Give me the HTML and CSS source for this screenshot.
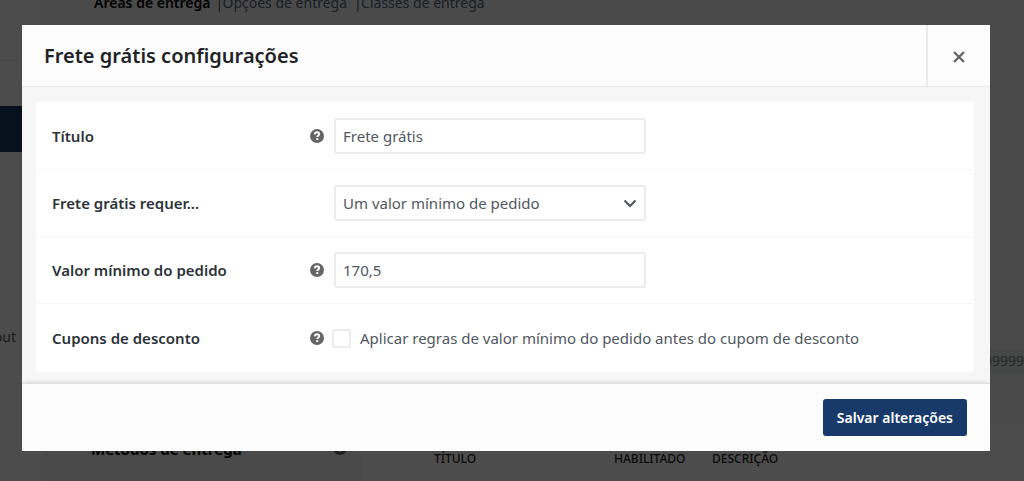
FILE: index.html
```html
<!DOCTYPE html>
<html lang="pt-BR">
<head>
<meta charset="utf-8">
<meta name="viewport" content="width=device-width, initial-scale=1">
<title>Frete grátis configurações</title>
<link rel="stylesheet" href="styles.css">
</head>
<body>
<svg class="sprite" aria-hidden="true">
  <symbol id="help" viewBox="0 0 14 14">
    <circle cx="7" cy="7" r="7" fill="currentColor"/>
    <path d="M4.800 5.400C4.900 3.900 5.800 3.300 7 3.300c1.400 0 2.200.7 2.200 1.800 0 1.600-2 1.500-2 3" fill="none" stroke="#fff" stroke-width="1.900"/>
    <rect x="6.200" y="9.200" width="2" height="1.800" fill="#fff"/>
  </symbol>
</svg>

<div class="page">
  <aside class="sidebar">
    <div class="sidebar-top"></div>
    <div class="sidebar-current"></div>
    <a class="sidebar-link" href="#checkout">out</a>
  </aside>
  <main class="content">
    <nav class="tabs">
      <a class="current" href="#areas">Áreas de entrega</a><span>|</span><a href="#opcoes">Opções de entrega</a><span>|</span><a href="#classes">Classes de entrega</a>
    </nav>
    <div class="postcodes"><span class="postcode-range">99999</span></div>
    <section class="methods">
      <h2>Métodos de entrega <svg class="help"><use href="#help"/></svg></h2>
      <table>
        <thead><tr><th class="col-title">Título</th><th class="col-enabled">Habilitado</th><th>Descrição</th></tr></thead>
      </table>
    </section>
  </main>
</div>

<div class="backdrop">
  <div class="modal" role="dialog" aria-modal="true" aria-labelledby="modal-title">
    <header class="modal-header">
      <h1 id="modal-title">Frete grátis configurações</h1>
      <button class="close" type="button" aria-label="Fechar">
        <svg viewBox="0 0 12 12"><path d="M1 1l10 10M11 1L1 11" fill="none" stroke="currentColor" stroke-width="2.400"/></svg>
      </button>
    </header>
    <form class="modal-form">
      <div class="modal-body">
        <div class="panel">
          <div class="row">
            <label for="title">Título</label>
            <svg class="help"><use href="#help"/></svg>
            <input class="field" id="title" type="text" value="Frete grátis">
          </div>
          <div class="row">
            <label for="requires">Frete grátis requer...</label>
            <span></span>
            <div class="select-wrap">
              <select class="field" id="requires"><option>Um valor mínimo de pedido</option></select>
              <svg class="chevron" viewBox="0 0 14 9"><path d="M1.500 1.500L7 7l5.500-5.500" fill="none" stroke="currentColor" stroke-width="2.200"/></svg>
            </div>
          </div>
          <div class="row">
            <label for="minimum">Valor mínimo do pedido</label>
            <svg class="help"><use href="#help"/></svg>
            <input class="field" id="minimum" type="text" value="170,5">
          </div>
          <div class="row">
            <span class="row-name">Cupons de desconto</span>
            <svg class="help"><use href="#help"/></svg>
            <label class="check"><input type="checkbox">Aplicar regras de valor mínimo do pedido antes do cupom de desconto</label>
          </div>
        </div>
      </div>
      <footer class="modal-footer">
        <button class="save" type="submit">Salvar alterações</button>
      </footer>
    </form>
  </div>
</div>
</body>
</html>
```
FILE: styles.css
```css
* { box-sizing: border-box; }

body {
  margin: 0;
  overflow: hidden;
  font-family: "Noto Sans", sans-serif;
  font-size: 15px;
  line-height: 24px;
  color: #3c434a;
}

h1, h2 { margin: 0; }
a { text-decoration: none; color: inherit; }
.sprite { position: absolute; width: 0; height: 0; }
.help { width: 14px; height: 14px; color: #666; }

/* Settings page under the modal */
.page { display: flex; height: 100vh; background: #f7f8fa; }

.sidebar { flex: none; width: 44px; background: #fff; font-size: 14px; }
.sidebar-top { height: 61px; margin-bottom: 45px; border-bottom: 1px solid #eee; }
.sidebar-current { height: 46px; margin-bottom: 173px; background: #143963; }
.sidebar-link { display: flex; justify-content: flex-end; width: 16px; color: #555; }

.content {
  flex: 1;
  min-width: 0;
  display: flex;
  flex-direction: column;
  font-size: 14px;
}
.tabs { display: flex; gap: 3px; height: 349px; padding-left: 50px; line-height: 6px; color: #50647e; }
.tabs .current { margin-right: 2px; font-weight: 600; color: #000; }
.tabs a + span + a + span { margin-left: 4px; }
.tabs span { color: #555; }
.tabs a + span { width: 4px; }
.postcodes { height: 76px; text-align: right; }
.postcode-range { display: inline-block; width: 80px; background: #e8e9ea; color: #888; }
.methods { flex: 1; display: flex; background: #f7f8fa; }
.methods h2 { width: 317px; padding: 12px 14px 0 47px; display: flex; justify-content: space-between; font-size: 15px; line-height: 24px; color: #111; }
.methods .help { margin-top: 4px; }
.methods table { flex: 1; background: #fff; border-spacing: 0; table-layout: fixed; }
.methods th { padding: 22px 0 0; vertical-align: top; font-size: 12px; font-weight: 500; text-align: left; text-transform: uppercase; color: #222; }
.methods .col-title { width: 253px; padding-left: 73px; }
.methods .col-enabled { width: 98px; }

/* Modal */
.backdrop {
  position: fixed;
  inset: 0;
  display: flex;
  align-items: flex-start;
  padding: 25px 34px 25px 22px;
  background: rgba(0, 0, 0, .7);
}
.modal { flex: 1; min-width: 0; background: #f6f6f6; }

.modal-header { display: flex; height: 62px; border-bottom: 1px solid #e8e8e8; background: #fcfcfc; }
.modal-header h1 { flex: 1; padding-left: 22px; font-size: 20px; font-weight: 600; line-height: 62px; color: #1d2327; }
.close { display: flex; align-items: center; justify-content: center; width: 64px; padding: 2px 0 0; border: 0; border-left: 2px solid #ebebeb; background: none; color: #666; }
.close svg { width: 12px; height: 12px; }

.modal-body { padding: 15px 16px 11px 14px; }
.panel { background: #fff; }
.row {
  display: grid;
  grid-template-columns: 258px 14px 1fr;
  align-items: center;
  min-height: 67px;
  padding-left: 16px;
}
.row + .row { border-top: 1px solid #f7f7f7; }
.row:last-child { min-height: 69px; }
.row > label:first-child, .row-name { font-weight: 600; color: #2c3338; }

.field {
  width: 312px;
  height: 36px;
  margin: 0 0 0 10px;
  padding: 0 7px;
  border: 2px solid #ecebf1;
  border-radius: 3px;
  background: #fff;
  font: inherit;
  color: #50575e;
}
select.field { appearance: none; }
.select-wrap { position: relative; width: 322px; }
.select-wrap .field { display: block; }
.chevron { position: absolute; right: 9px; top: 14px; width: 14px; height: 9px; color: #50575e; pointer-events: none; }

.row .check { display: flex; align-items: center; gap: 9px; margin-left: 8px; color: #50575e; }
.check input { appearance: none; width: 19px; height: 19px; margin: 0; border: 2px solid #ecebf1; border-radius: 3px; background: #fff; }

.modal-footer {
  display: flex;
  justify-content: flex-end;
  padding: 15px 23px 15px;
  border-top: 1px solid #e0e0e0;
  box-shadow: 0 -3px 4px -2px rgba(0, 0, 0, .12);
  background: #fcfcfc;
}
.save { height: 37px; padding: 0 14px; border: 0; border-radius: 3px; background: #183a6b; color: #fff; font: inherit; font-size: 14px; font-weight: 600; }
```
